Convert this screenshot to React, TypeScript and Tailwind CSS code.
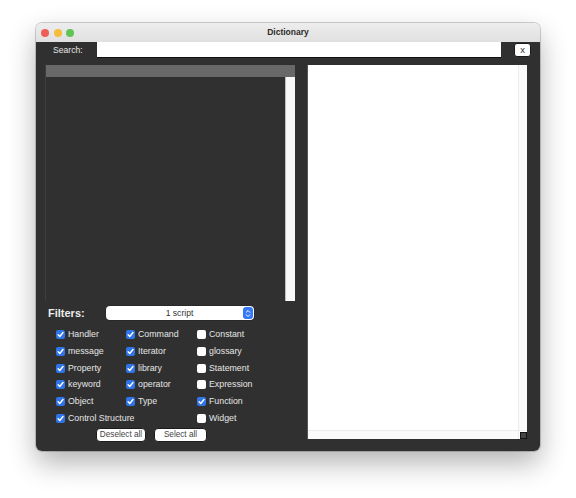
import React from 'react';

type Item = [string, boolean];

const FILTER_COLS: { width: string; items: Item[] }[] = [
  {
    width: 'w-[70px]',
    items: [
      ['Handler', true],
      ['message', true],
      ['Property', true],
      ['keyword', true],
      ['Object', true],
      ['Control Structure', true],
    ],
  },
  {
    width: 'w-[71px]',
    items: [
      ['Command', true],
      ['Iterator', true],
      ['library', true],
      ['operator', true],
      ['Type', true],
    ],
  },
  {
    width: 'w-[80px]',
    items: [
      ['Constant', false],
      ['glossary', false],
      ['Statement', false],
      ['Expression', false],
      ['Function', true],
      ['Widget', false],
    ],
  },
];

function Check({ on }: { on: boolean }) {
  if (!on) {
    return <span className="h-[9px] w-[9px] shrink-0 rounded-[2px] bg-white" />;
  }
  return (
    <span className="flex h-[9px] w-[9px] shrink-0 items-center justify-center rounded-[2px] bg-[#2f74e8]">
      <svg width="9" height="9" viewBox="0 0 9 9" fill="none">
        <path d="M2.1 4.7 L3.8 6.5 L7 2.5" stroke="white" strokeWidth="1.4" strokeLinecap="round" strokeLinejoin="round" />
      </svg>
    </span>
  );
}

export default function App() {
  return (
    <div
      className="h-[498px] w-[576px] bg-white pl-[36px] pt-[23px]"
      style={{ fontFamily: '"Liberation Sans", Arial, sans-serif' }}
    >
      <div className="flex h-[428px] w-[504px] flex-col overflow-hidden rounded-[6px] shadow-[0_12px_28px_rgba(0,0,0,0.3),0_0_0_1px_rgba(0,0,0,0.18)]">
        {/* title bar */}
        <div className="grid h-[19px] grid-cols-[1fr_auto_1fr] items-center bg-gradient-to-b from-[#ededed] to-[#e0e0e0]">
          <div className="flex items-center gap-[4.5px] pl-[5px]">
            <span className="h-2 w-2 rounded-full bg-[#ee5f57]" />
            <span className="h-2 w-2 rounded-full bg-[#f6bd3b]" />
            <span className="h-2 w-2 rounded-full bg-[#5fc453]" />
          </div>
          <span className="text-[8.5px] font-bold text-[#2a2a2a]">Dictionary</span>
          <div />
        </div>

        <div className="flex flex-1 flex-col bg-[#303030]">
          {/* search row */}
          <div className="flex h-[16px]">
            <div className="flex w-[61px] items-center pl-[17px] text-[8.6px] text-[#e6e6e6]">Search:</div>
            <div className="w-[404px] border-b border-[#111] bg-white" />
            <div className="flex flex-1 pl-[13px] pt-[1px]">
              <button className="flex h-[14px] w-[17px] items-center justify-center rounded-[3px] border border-[#1a1a1a] bg-white pb-[1px] text-[9.5px] leading-none text-[#333]">
                x
              </button>
            </div>
          </div>

          {/* main */}
          <div className="mt-[7px] flex pl-[9px]">
            <div className="flex w-[250px] flex-col">
              <div className="flex h-[236px] flex-col border-l border-[#3e3e3e]">
                <div className="h-[12px] bg-[#686868]" />
                <div className="flex flex-1 justify-end">
                  <div className="w-[10px] border-l border-[#bdbdbd] bg-[#f8f8f8]" />
                </div>
              </div>

              <div className="mt-[5px] flex h-[14px] items-center">
                <span className="w-[61px] pl-[3px] text-[11px] font-bold text-[#ececec]">Filters:</span>
                <div className="flex h-[14px] w-[148px] items-center rounded-[4px] bg-white pr-[1px] shadow-[0_0_0_0.5px_rgba(0,0,0,0.3)]">
                  <span className="flex-1 pl-[10px] text-center text-[8.6px] text-[#333]">1 script</span>
                  <span className="flex h-[12px] w-[10px] items-center justify-center rounded-[3px] bg-[#3478f6]">
                    <svg width="6" height="9" viewBox="0 0 6 9" fill="none">
                      <path d="M1.2 3.3 L3 1.5 L4.8 3.3 M1.2 5.7 L3 7.5 L4.8 5.7" stroke="white" strokeWidth="1" strokeLinecap="round" strokeLinejoin="round" />
                    </svg>
                  </span>
                </div>
              </div>

              <div className="mt-[6.5px] flex pl-[11px]">
                {FILTER_COLS.map((col, ci) => (
                  <div key={ci} className={`flex flex-col ${col.width}`}>
                    {col.items.map(([label, on]) => (
                      <div key={label} className="flex h-[16.7px] items-center gap-[3px] whitespace-nowrap">
                        <Check on={on} />
                        <span className="text-[8.8px] text-[#e6e6e6]">{label}</span>
                      </div>
                    ))}
                  </div>
                ))}
              </div>

              <div className="mt-[1.5px] flex gap-[8px] pl-[51px]">
                <button className="flex h-[13.5px] w-[50px] items-center justify-center whitespace-nowrap rounded-[4px] border border-[#1c1c1c] bg-white px-0 text-[8.2px] leading-none text-[#444]">
                  Deselect all
                </button>
                <button className="flex h-[13.5px] w-[53px] items-center justify-center whitespace-nowrap rounded-[4px] border border-[#1c1c1c] bg-white px-0 text-[8.2px] leading-none text-[#444]">
                  Select all
                </button>
              </div>
            </div>

            {/* right text panel */}
            <div className="ml-[12px] flex h-[374px] w-[220px] flex-col border-l border-[#555] bg-white">
              <div className="flex flex-1">
                <div className="flex-1" />
                <div className="w-[9px] border-l border-[#ececec] bg-[#fbfbfb]" />
              </div>
              <div className="flex h-[9px]">
                <div className="flex-1 border-t border-[#ececec] bg-[#fbfbfb]" />
                <div className="flex w-[9px] items-center justify-center border-t border-l border-[#ececec]">
                  <span className="h-[7px] w-[7px] border border-[#111] bg-[#444]" />
                </div>
              </div>
            </div>
          </div>
        </div>
      </div>
    </div>
  );
}
